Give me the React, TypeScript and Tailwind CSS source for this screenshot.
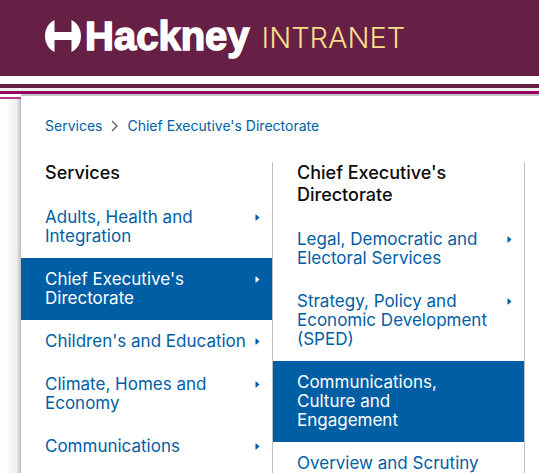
import { Fragment, type ReactNode } from "react";

type Item = { lines: string[]; active?: boolean; arrow?: boolean };
type Column = { title: string[]; items: Item[] };

const columns: Column[] = [
  {
    title: ["Services"],
    items: [
      { lines: ["Adults, Health and", "Integration"], arrow: true },
      { lines: ["Chief Executive's", "Directorate"], arrow: true, active: true },
      { lines: ["Children's and Education"], arrow: true },
      { lines: ["Climate, Homes and", "Economy"], arrow: true },
      { lines: ["Communications"], arrow: true },
    ],
  },
  {
    title: ["Chief Executive's", "Directorate"],
    items: [
      { lines: ["Legal, Democratic and", "Electoral Services"], arrow: true },
      { lines: ["Strategy, Policy and", "Economic Development", "(SPED)"], arrow: true },
      { lines: ["Communications,", "Culture and", "Engagement"], active: true },
      { lines: ["Overview and Scrutiny"] },
    ],
  },
];

function withBreaks(lines: string[]): ReactNode {
  return lines.map((line, i) => (
    <Fragment key={line}>
      {i > 0 && <br />}
      {line}
    </Fragment>
  ));
}

function Logo() {
  return (
    <a href="#home" className="flex items-center">
      <svg viewBox="0 0 36 32" className="h-8 w-9" fill="#fff" aria-hidden="true">
        <path d="M9.5 0V12H26.5V0C32.5 3 36 9 36 16S32.5 29 26.5 32V20H9.5V32C3.5 29 0 23 0 16S3.5 3 9.5 0Z" />
      </svg>
      <span className="ml-1 font-['Liberation_Sans',Arial,sans-serif] text-[40px] leading-10 font-bold text-white [-webkit-text-stroke:1.5px_#fff]">
        Hackney
      </span>
      <span className="ml-3 pt-1 text-[29px] leading-10 font-light text-[#fbdc8c]">INTRANET</span>
    </a>
  );
}

function MenuColumn({ title, items }: Column) {
  return (
    <section className="w-[252px] shrink-0 border-r border-[#bfc1c3]">
      <h2 className="mb-3 px-6 text-[18px] leading-[22px] font-medium text-[#0b0c0c]">{withBreaks(title)}</h2>
      <ul>
        {items.map((item) => (
          <li key={item.lines[0]}>
            <a
              href="#menu"
              className={`flex items-start justify-between py-3 pr-3 pl-6 text-[17px] leading-[19px] ${
                item.active ? "bg-[#005ea5] text-white" : "text-[#005ea5]"
              }`}
            >
              <span className="whitespace-nowrap">{withBreaks(item.lines)}</span>
              {item.arrow && (
                <svg viewBox="0 0 5 7" className="mt-1.5 h-[7px] w-[5px] shrink-0" fill="currentColor" aria-hidden="true">
                  <path d="M0.5 0.5H1.2L4.5 3.5L1.2 6.5H0.5Z" />
                </svg>
              )}
            </a>
          </li>
        ))}
      </ul>
    </section>
  );
}

export default function App() {
  return (
    <div className="flex h-screen flex-col overflow-hidden bg-white font-[Inter,sans-serif]">
      <header className="shrink-0">
        <div className="flex h-[76px] items-center bg-[#662045] px-[45px] pb-1">
          <Logo />
        </div>
        <div className="mt-2 h-1 bg-[#662045]" />
        <div className="h-[3px] bg-[#f0f1f1]" />
        <div className="h-[3px] bg-[#98005d]" />
      </header>
      <div className="flex min-h-0 flex-1">
        <div className="w-[21px] shrink-0 pt-[3px]">
          <div className="h-0.5 bg-[#b13c88]" />
          <div className="h-full bg-linear-to-r from-white from-30% via-[#ededf0] via-80% to-[#bcbcc0]" />
        </div>
        <main className="min-w-0 flex-1 border-t-2 border-[#c4c4c4] bg-white">
          <nav aria-label="Breadcrumb" className="px-6 pt-5">
            <ol className="flex items-center text-[14px] leading-5 whitespace-nowrap text-[#005ea5]">
              <li>
                <a href="#services">Services</a>
              </li>
              <li className="flex items-center">
                <svg viewBox="0 0 7 12" className="mx-[9px] h-3 w-[7px]" fill="none" stroke="#505a5f" strokeWidth="1.3" aria-hidden="true">
                  <path d="M1 1L6 6L1 11" />
                </svg>
                <a href="#chief">Chief Executive's Directorate</a>
              </li>
            </ol>
          </nav>
          <nav aria-label="Services" className="mt-[26px] flex">
            {columns.map((column) => (
              <MenuColumn key={column.title[0]} {...column} />
            ))}
          </nav>
        </main>
      </div>
    </div>
  );
}
